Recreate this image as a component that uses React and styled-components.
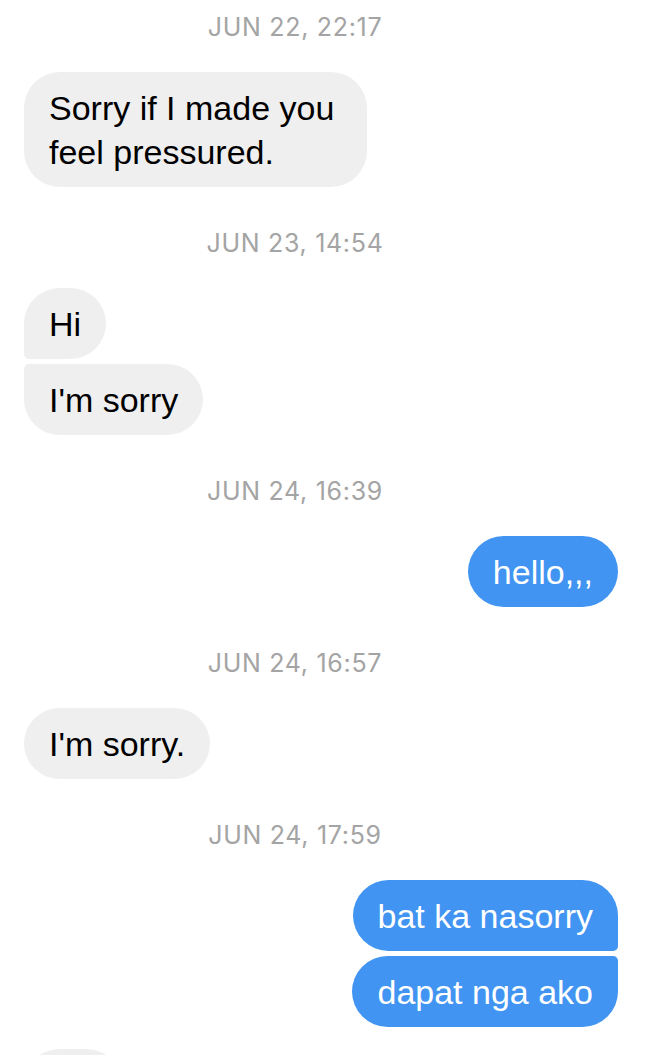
import React from "react";
import styled, { createGlobalStyle, css } from "styled-components";

const Global = createGlobalStyle`
  html, body {
    margin: 0;
    padding: 0;
    background: #ffffff;
    overflow: hidden;
  }
  body {
    font-family: "Liberation Sans", Arial, sans-serif;
  }
`;

const Page = styled.div`
  display: flex;
  flex-direction: column;
  padding: 12px 29px 0 24px;
  height: 1055px;
  box-sizing: border-box;
  overflow: hidden;
`;

const Section = styled.section`
  display: flex;
  flex-direction: column;
  & + & {
    margin-top: 41px;
  }
`;

const Timestamp = styled.div`
  text-align: center;
  padding-right: 52px;
  font-family: Inter, "Liberation Sans", sans-serif;
  font-weight: 400;
  font-size: 25px;
  line-height: 30px;
  letter-spacing: 0.7px;
  color: #a4a4a4;
  margin-bottom: 30px;
`;

const Group = styled.div`
  display: flex;
  flex-direction: column;
  align-items: ${(p) => (p.$mine ? "flex-end" : "flex-start")};
  gap: 5px;
  & + & {
    margin-top: 22px;
  }
`;

const R = 36;
const S = 5;

const Bubble = styled.div`
  box-sizing: border-box;
  max-width: 343px;
  min-width: ${(p) => (p.$empty ? "98px" : "0")};
  min-height: 71px;
  padding: 13.5px 25px;
  font-size: 34px;
  line-height: 44px;
  border-radius: ${R}px;
  background: ${(p) => (p.$mine ? "#4194f1" : "#efefef")};
  color: ${(p) => (p.$mine ? "#ffffff" : "#000000")};
  ${(p) =>
    !p.$mine &&
    css`
      ${p.$pos === "first" && `border-bottom-left-radius: ${S}px;`}
      ${p.$pos === "last" && `border-top-left-radius: ${S}px;`}
      ${p.$pos === "middle" &&
      `border-top-left-radius: ${S}px; border-bottom-left-radius: ${S}px;`}
    `}
  ${(p) =>
    p.$mine &&
    css`
      ${p.$pos === "first" && `border-bottom-right-radius: ${S}px;`}
      ${p.$pos === "last" && `border-top-right-radius: ${S}px;`}
      ${p.$pos === "middle" &&
      `border-top-right-radius: ${S}px; border-bottom-right-radius: ${S}px;`}
    `}
`;

const sections = [
  {
    time: "JUN 22, 22:17",
    groups: [{ mine: false, msgs: ["Sorry if I made you feel pressured."] }],
  },
  {
    time: "JUN 23, 14:54",
    groups: [{ mine: false, msgs: ["Hi", "I'm sorry"] }],
  },
  {
    time: "JUN 24, 16:39",
    groups: [{ mine: true, msgs: ["hello,,,"] }],
  },
  {
    time: "JUN 24, 16:57",
    groups: [{ mine: false, msgs: ["I'm sorry."] }],
  },
  {
    time: "JUN 24, 17:59",
    groups: [
      { mine: true, msgs: ["bat ka nasorry", "dapat nga ako"] },
      { mine: false, msgs: [""] },
    ],
  },
];

function posOf(i, n) {
  if (n === 1) return "single";
  if (i === 0) return "first";
  if (i === n - 1) return "last";
  return "middle";
}

export default function App() {
  return (
    <>
      <Global />
      <Page>
        {sections.map((s) => (
          <Section key={s.time}>
            <Timestamp>{s.time}</Timestamp>
            {s.groups.map((g, gi) => (
              <Group key={gi} $mine={g.mine}>
                {g.msgs.map((m, i) => (
                  <Bubble
                    key={i}
                    $mine={g.mine}
                    $empty={m === ""}
                    $pos={posOf(i, g.msgs.length)}
                  >
                    {m}
                  </Bubble>
                ))}
              </Group>
            ))}
          </Section>
        ))}
      </Page>
    </>
  );
}
